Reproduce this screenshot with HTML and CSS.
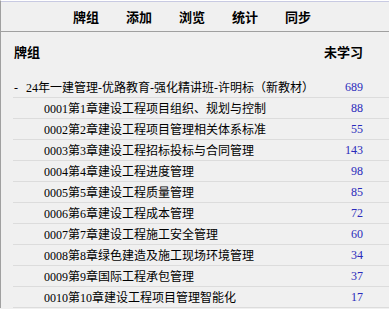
FILE: index.html
```html
<!DOCTYPE html>
<html lang="zh-CN">
<head>
    <meta charset="UTF-8">
    <title>牌组</title>
    <link rel="stylesheet" href="styles.css">
</head>
<body>
    <div class="window">
        <div class="toolbar">
            <span class="tool">牌组</span>
            <span class="tool">添加</span>
            <span class="tool">浏览</span>
            <span class="tool">统计</span>
            <span class="tool">同步</span>
        </div>
        <div class="deck-list">
            <div class="deck-head">
                <span class="deck-name">牌组</span>
                <span class="deck-count">未学习</span>
            </div>
            <div class="deck-row parent">
                <span class="deck-name"><span class="toggle">-</span>24年一建管理-优路教育-强化精讲班-许明标（新教材）</span>
                <span class="deck-count">689</span>
            </div>
            <div class="deck-row child"><span class="deck-name">0001第1章建设工程项目组织、规划与控制</span><span class="deck-count">88</span></div>
            <div class="deck-row child"><span class="deck-name">0002第2章建设工程项目管理相关体系标准</span><span class="deck-count">55</span></div>
            <div class="deck-row child"><span class="deck-name">0003第3章建设工程招标投标与合同管理</span><span class="deck-count">143</span></div>
            <div class="deck-row child"><span class="deck-name">0004第4章建设工程进度管理</span><span class="deck-count">98</span></div>
            <div class="deck-row child"><span class="deck-name">0005第5章建设工程质量管理</span><span class="deck-count">85</span></div>
            <div class="deck-row child"><span class="deck-name">0006第6章建设工程成本管理</span><span class="deck-count">72</span></div>
            <div class="deck-row child"><span class="deck-name">0007第7章建设工程施工安全管理</span><span class="deck-count">60</span></div>
            <div class="deck-row child"><span class="deck-name">0008第8章绿色建造及施工现场环境管理</span><span class="deck-count">34</span></div>
            <div class="deck-row child"><span class="deck-name">0009第9章国际工程承包管理</span><span class="deck-count">37</span></div>
            <div class="deck-row child"><span class="deck-name">0010第10章建设工程项目管理智能化</span><span class="deck-count">17</span></div>
        </div>
    </div>
</body>
</html>
```

FILE: styles.css
```css
body { margin: 0; background-color: #f0f0f0; font-family: 'Liberation Serif', 'Noto Sans CJK SC', sans-serif; font-size: 12px; color: #000; overflow: hidden; }
.window { border-left: 1px solid #a0a0a0; border-top: 1px solid #ffffff; min-height: 308px; box-sizing: border-box; }
.toolbar { display: flex; gap: 27px; padding-left: 72px; height: 29px; align-items: center; border-top: 1px solid #c8cae2; border-bottom: 1px solid #a0a0a0; font-size: 13px; }
.tool { font-weight: bold; }
.deck-list { padding: 9px 0 0 12px; }
.deck-head { display: flex; height: 20px; align-items: center; font-weight: bold; font-size: 13px; margin-bottom: 16px; }
.deck-head .deck-name { padding-left: 1px; }
.deck-row { display: flex; height: 20px; align-items: center; border-bottom: 1px solid #dcdcdc; }
.deck-name { flex: 1; white-space: nowrap; overflow: hidden; }
.deck-count { padding-right: 26px; text-align: right; }
.deck-row .deck-count { color: #2a2abb; }
.parent .deck-name { padding-left: 1px; }
.toggle { display: inline-block; width: 12px; }
.child .deck-name { padding-left: 31px; }
```
